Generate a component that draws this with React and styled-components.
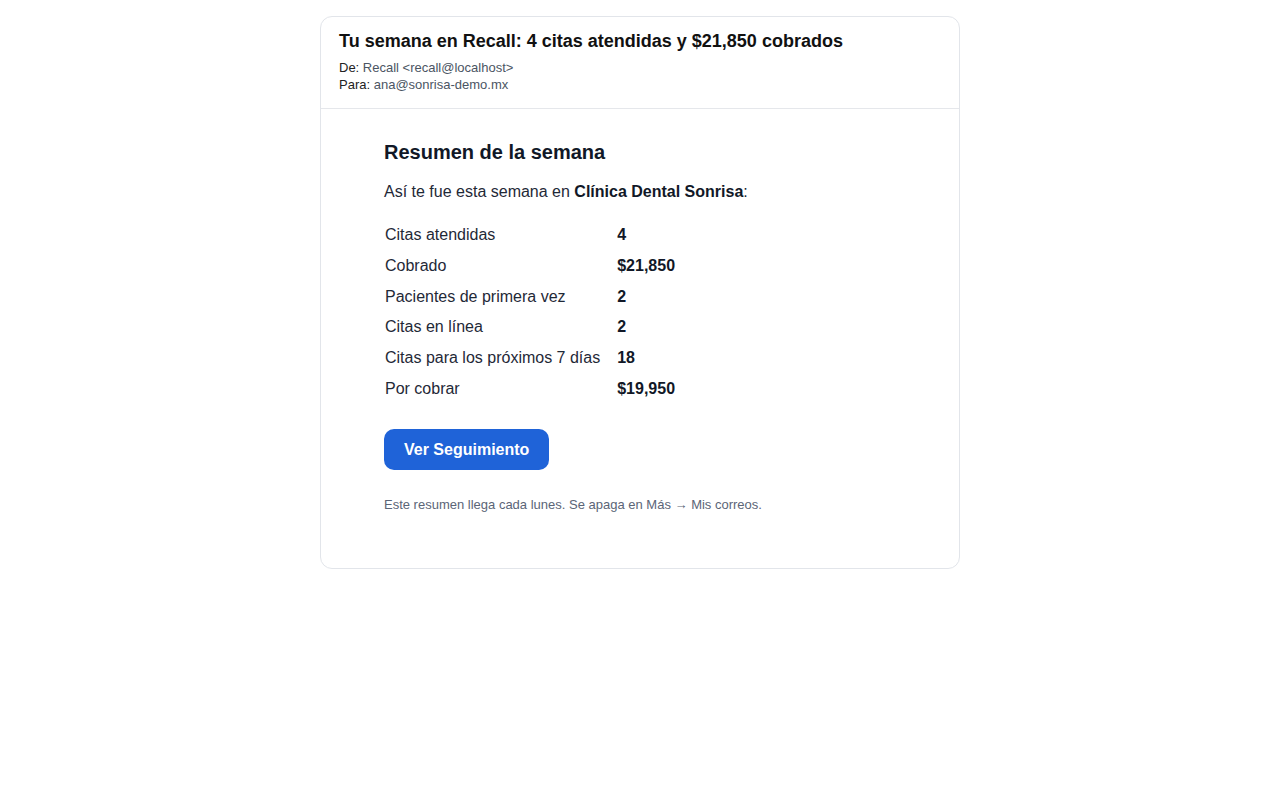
import React from "react";
import styled, { createGlobalStyle } from "styled-components";

const Global = createGlobalStyle`
  * { box-sizing: border-box; }
  body {
    margin: 0;
    background: #ffffff;
    font-family: "Liberation Sans", Arial, sans-serif;
    color: #111827;
  }
`;

const Page = styled.div`
  display: flex;
  justify-content: center;
  padding-top: 16px;
`;

const Card = styled.div`
  width: 640px;
  border: 1px solid #e2e5ea;
  border-radius: 12px;
  overflow: hidden;
  background: #fff;
`;

const Header = styled.div`
  padding: 12px 18px 15px;
  border-bottom: 1px solid #e5e7eb;
`;

const Subject = styled.h1`
  margin: 0 0 6px;
  font-size: 18px;
  line-height: 24px;
  font-weight: 700;
  color: #111111;
`;

const Meta = styled.div`
  font-size: 13px;
  line-height: 17px;
  color: #222;
`;

const MetaValue = styled.span`
  color: #4b5563;
`;

const Body = styled.div`
  padding: 30px 63px 55px;
`;

const Heading = styled.h2`
  margin: 0 0 16px;
  font-size: 20px;
  line-height: 26px;
  font-weight: 700;
  color: #111827;
`;

const Intro = styled.p`
  margin: 0 0 17px;
  font-size: 16px;
  line-height: 22px;
  color: #1f2937;
  strong { color: #111827; }
`;

const Stats = styled.div`
  display: grid;
  grid-template-columns: max-content max-content;
  column-gap: 17px;
  margin: 0 0 24px 1px;
  font-size: 16px;
  line-height: 18.8px;
`;

const Label = styled.div`
  padding: 6px 0;
  color: #1f2937;
`;

const Value = styled.div`
  padding: 6px 0;
  font-weight: 700;
  color: #111827;
`;

const Button = styled.a`
  display: inline-block;
  background: #1f63d8;
  color: #fff;
  font-weight: 700;
  font-size: 16px;
  line-height: 19px;
  padding: 11px 20px;
  border-radius: 10px;
  text-decoration: none;
`;

const Footer = styled.p`
  margin: 26px 0 0;
  font-size: 13px;
  line-height: 17px;
  color: #5b6577;
`;

const stats = [
  ["Citas atendidas", "4"],
  ["Cobrado", "$21,850"],
  ["Pacientes de primera vez", "2"],
  ["Citas en línea", "2"],
  ["Citas para los próximos 7 días", "18"],
  ["Por cobrar", "$19,950"],
];

export default function App() {
  return (
    <>
      <Global />
      <Page>
        <Card>
          <Header>
            <Subject>Tu semana en Recall: 4 citas atendidas y $21,850 cobrados</Subject>
            <Meta>De: <MetaValue>Recall &lt;recall@localhost&gt;</MetaValue></Meta>
            <Meta>Para: <MetaValue>ana@sonrisa-demo.mx</MetaValue></Meta>
          </Header>
          <Body>
            <Heading>Resumen de la semana</Heading>
            <Intro>
              Así te fue esta semana en <strong>Clínica Dental Sonrisa</strong>:
            </Intro>
            <Stats>
              {stats.map(([l, v]) => (
                <React.Fragment key={l}>
                  <Label>{l}</Label>
                  <Value>{v}</Value>
                </React.Fragment>
              ))}
            </Stats>
            <Button href="#">Ver Seguimiento</Button>
            <Footer>Este resumen llega cada lunes. Se apaga en Más → Mis correos.</Footer>
          </Body>
        </Card>
      </Page>
    </>
  );
}
